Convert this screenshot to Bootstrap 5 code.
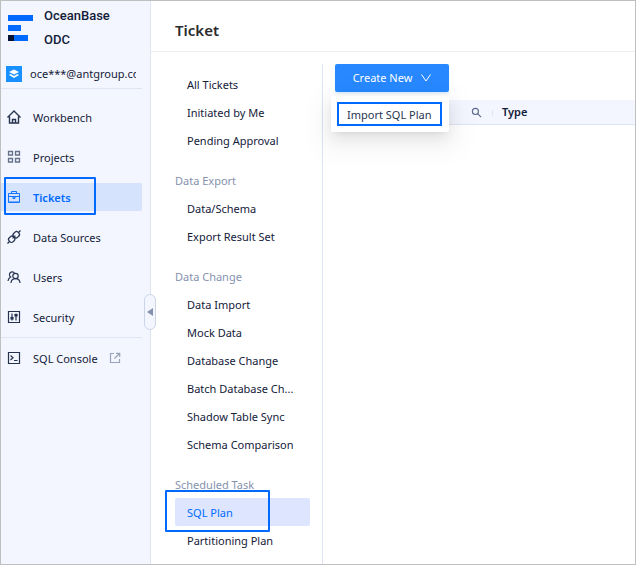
<!DOCTYPE html>
<html lang="en">
<head>
<meta charset="utf-8">
<meta name="viewport" content="width=device-width, initial-scale=1">
<title>OceanBase ODC - Ticket</title>
<link rel="stylesheet" href="https://cdn.jsdelivr.net/npm/bootstrap@5.3.0/dist/css/bootstrap.min.css">
<style>
body { font-family: "Noto Sans", "Open Sans", sans-serif; font-size: 11px; line-height: 20px; color: #132039; }
.shell { border: 1px solid #bfbfbf; }
.sidebar { width: 150px; background: #f3f6fe; border-right: 1px solid #dfe5f2; padding-right: 8px; }
.brand { font-family: Roboto, sans-serif; font-size: 13px; font-weight: 500; line-height: 24px; padding: 3px 0 0 7px; gap: 11px; }
.account { height: 37px; padding: 8px 6px 0 5px; gap: 8px; border-bottom: 1px solid #dfe5f2; white-space: nowrap; }
.account-name { overflow: hidden; }
.side-menu { padding-top: 14px; gap: 12px; }
.side-link { height: 28px; padding: 1px 0 0 5px; gap: 11px; color: #132039; text-decoration: none; }
.side-link svg { margin-bottom: 1px; }
.side-link.active { background: #d5e3fd; color: #006aff; font-weight: 600; border-radius: 0 2px 2px 0; }
.side-foot { margin-top: 6px; padding-top: 6px; border-top: 1px solid #dfe5f2; }
.collapse-handle { position: absolute; right: -6px; top: 293px; width: 12px; height: 36px; border: 1px solid #ccd5e8; border-radius: 6px; background: #f3f6fe; }
.page-head { height: 51px; padding: 8px 24px 0; border-bottom: 1px solid #ebedf1; }
.page-head h1 { font-size: 15px; line-height: 24px; font-weight: 600; color: #2b2b2b; }
.ticket-nav { width: 172px; margin-top: 12px; padding: 6px 12px 8px 24px; border-right: 1px solid #dde4f5; }
.group-title { line-height: 26px; padding: 2px 0 0; margin-top: 12px; color: #8592ad; }
.ticket-link { display: block; line-height: 26px; padding: 2px 12px 0; color: #132039; text-decoration: none; border-radius: 2px; white-space: nowrap; }
.ticket-link.active { background: #dde6fe; color: #006aff; }
.outline-box { position: absolute; border: 2px solid #006aff; border-radius: 1px; pointer-events: none; }
.outline-tickets { left: 3px; top: -6px; width: 92px; height: 38px; }
.outline-plan { left: -10px; top: -8px; width: 105px; height: 42px; }
.work { padding: 12px 0 0 12px; }
.btn-create { width: 114px; height: 28px; padding: 0; gap: 9px; font-size: 11px; line-height: 20px; border: 0; border-radius: 2px; background: #2788ff; color: #fff; box-shadow: 0 2px 2px #e3f1f8; }
.btn-create:hover, .btn-create.show { background: #2788ff !important; color: #fff !important; }
.create-menu { min-width: 118px; left: -4px; top: 32px; padding: 6px; border: 0; border-radius: 2px; font-size: 11px; box-shadow: 0 3px 6px -4px #0000001f, 0 6px 16px #00000014, 0 9px 28px 8px #0000000d; }
.create-menu .dropdown-item { width: 105px; padding: 1px 8px 0; line-height: 19px; border: 2px solid #006aff; color: #273450; }
.ticket-table { margin: 8px 0 0; font-size: 11px; line-height: 20px; color: #132039; --bs-table-bg: #f3f6fe; }
.ticket-table th { height: 24px; padding: 2px 9px 1px; border-bottom: 1px solid #dfe5f2; font-weight: 600; color: #132039; vertical-align: middle; }
.col-number { width: 158px; position: relative; }
.col-number::after { content: ""; position: absolute; right: 0; top: 10px; width: 1px; height: 6px; background: #dfe5f2; }
.btn-search { padding: 0 2px 0 0; border: 0; color: #5c6b8a; }
</style>
</head>
<body>
<div class="shell d-flex min-vh-100">
  <aside class="sidebar flex-shrink-0 position-relative">
    <div class="brand d-flex align-items-center">
      <svg width="25" height="26" viewBox="0 0 25 26" aria-hidden="true" shape-rendering="crispEdges"><path fill="#006aff" d="M0 0h25v6H0zM0 10h13v6H0zM6 20h14v6H6z"/><path fill="#071131" d="M0 20h6v6H0z"/></svg>
      <div>OceanBase<br>ODC</div>
    </div>
    <div class="account d-flex align-items-center">
      <svg class="flex-shrink-0" width="16" height="16" viewBox="0 0 16 16" aria-hidden="true"><path fill="#1890ff" d="M0 0h16v16H0z"/><path fill="#fff" d="M8 3.500l5 2.500-5 2.500-5-2.500zM3 9l1.500-.9L8 9.900l3.500-1.800L13 9l-5 3z"/></svg>
      <span class="account-name">oce***@antgroup.com</span>
    </div>
    <nav aria-label="Main">
      <div class="side-menu d-flex flex-column">
        <a class="side-link d-flex align-items-center" href="#"><svg width="16" height="16" viewBox="0 0 16 16" fill="none" stroke="#26334f" stroke-width="1.400" aria-hidden="true"><path d="M1.500 8.500L8 2l6.500 6.500M3.500 7.500v6.500h9V7.500M6.500 14v-3.500h3V14"/></svg>Workbench</a>
        <a class="side-link d-flex align-items-center" href="#"><svg width="16" height="16" viewBox="0 0 16 16" fill="none" stroke="#65708a" stroke-width="1.300" aria-hidden="true"><path d="M2.500 2.500h4v3.500h-4zM9.500 2.500h4v3.500h-4zM2.500 9.500h4v3.500h-4zM9.500 9.500h4v3.500h-4z"/></svg>Projects</a>
        <a class="side-link active d-flex align-items-center position-relative" href="#" aria-current="page"><svg width="16" height="16" viewBox="0 0 16 16" fill="none" stroke="#1473ff" stroke-width="1" aria-hidden="true"><path d="M2.500 4.500h11v9h-11zM5.500 4.500v-2h5v2M2.500 7.500h11"/><path stroke-opacity=".5" d="M3 12.500h10"/><path d="M7 8h2v1.500H7z"/></svg>Tickets<span class="outline-box outline-tickets"></span></a>
        <a class="side-link d-flex align-items-center" href="#"><svg width="16" height="16" viewBox="0 0 16 16" fill="none" stroke="#26334f" stroke-width="1.300" aria-hidden="true"><path d="M1.500 14.500l2-2M12.500 3.500l2-2"/><g transform="rotate(-45 8 8)"><rect x="1.800" y="5.300" width="6" height="5.400" rx="2"/><rect x="8.200" y="5.300" width="6" height="5.400" rx="2"/><path d="M6 8h4"/></g></svg>Data Sources</a>
        <a class="side-link d-flex align-items-center" href="#"><svg width="16" height="16" viewBox="0 0 16 16" fill="none" stroke="#26334f" stroke-width="1.200" aria-hidden="true"><circle cx="9.500" cy="7" r="2.700"/><path d="M5 14c.2-2.800 2-4.300 4.500-4.300S13.800 11.200 14 14M2 12c.2-2 1-3.200 2.700-4A2.800 2.800 0 1 1 8.500 4"/></svg>Users</a>
        <a class="side-link d-flex align-items-center" href="#"><svg width="16" height="16" viewBox="0 0 16 16" fill="none" stroke="#26334f" stroke-width="1.200" aria-hidden="true"><path d="M2.500 2.500h11v11h-11zM6 4.500v7M10 4.500v7"/><path fill="#26334f" d="M5 8.500h2v1.500H5zM9 5.500h2V7H9z"/></svg>Security</a>
      </div>
      <div class="side-foot">
        <a class="side-link d-flex align-items-center" href="#"><svg width="16" height="16" viewBox="0 0 16 16" fill="none" stroke="#26334f" stroke-width="1.200" aria-hidden="true"><path d="M2.500 2.500h11v11h-11zM4.500 5.500L7 7.700 4.500 10M8 10.500h3.500"/></svg>SQL Console<svg width="12" height="12" viewBox="0 0 12 12" fill="none" stroke="#98a3b9" stroke-width="1.200" aria-hidden="true"><path d="M5 1.500H1.500v9h9V7M7 1.300h3.700V5M10.500 1.500l-5 5"/></svg></a>
      </div>
    </nav>
    <button class="collapse-handle btn p-0 d-flex align-items-center justify-content-center" type="button" aria-label="Collapse sidebar"><svg width="6" height="8" viewBox="0 0 6 8" aria-hidden="true"><path fill="#8592ad" d="M6 0v8L0 4z"/></svg></button>
  </aside>

  <div class="flex-grow-1 d-flex flex-column">
    <header class="page-head d-flex align-items-center"><h1 class="m-0">Ticket</h1></header>
    <div class="d-flex flex-grow-1">
      <nav class="ticket-nav flex-shrink-0" aria-label="Ticket types">
        <a class="ticket-link" href="#">All Tickets</a>
        <a class="ticket-link" href="#">Initiated by Me</a>
        <a class="ticket-link" href="#">Pending Approval</a>
        <div class="group-title">Data Export</div>
        <a class="ticket-link" href="#">Data/Schema</a>
        <a class="ticket-link" href="#">Export Result Set</a>
        <div class="group-title">Data Change</div>
        <a class="ticket-link" href="#">Data Import</a>
        <a class="ticket-link" href="#">Mock Data</a>
        <a class="ticket-link" href="#">Database Change</a>
        <a class="ticket-link" href="#">Batch Database Ch...</a>
        <a class="ticket-link" href="#">Shadow Table Sync</a>
        <a class="ticket-link" href="#">Schema Comparison</a>
        <div class="group-title">Scheduled Task</div>
        <a class="ticket-link active position-relative" href="#" aria-current="true">SQL Plan<span class="outline-box outline-plan"></span></a>
        <a class="ticket-link" href="#">Partitioning Plan</a>
      </nav>
      <main class="work flex-grow-1">
        <div class="dropdown">
          <button class="btn btn-primary btn-create show d-flex align-items-center justify-content-center" type="button" data-bs-toggle="dropdown" aria-expanded="true">Create New<svg width="10" height="8" viewBox="0 0 10 8" fill="none" stroke="#fff" aria-hidden="true"><path d="M.5.500L5 7 9.500.500"/></svg></button>
          <ul class="dropdown-menu create-menu show">
            <li><a class="dropdown-item" href="#">Import SQL Plan</a></li>
          </ul>
        </div>
        <table class="table ticket-table">
          <thead>
            <tr>
              <th class="col-number" scope="col"><button class="btn btn-search d-flex ms-auto" type="button" aria-label="Search tickets"><svg width="11" height="11" viewBox="0 0 12 12" fill="none" stroke="currentColor" stroke-width="1.200" aria-hidden="true"><circle cx="4.800" cy="4.800" r="3.300"/><path d="M7.200 7.200L11 11"/></svg></button></th>
              <th scope="col">Type</th>
            </tr>
          </thead>
        </table>
      </main>
    </div>
  </div>
</div>
<script src="https://cdn.jsdelivr.net/npm/bootstrap@5.3.0/dist/js/bootstrap.bundle.min.js"></script>
</body>
</html>
